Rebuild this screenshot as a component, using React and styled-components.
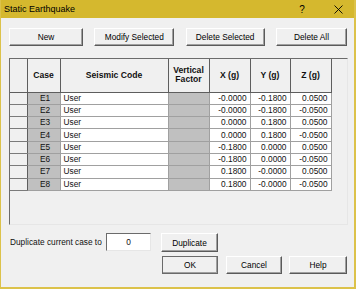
import React from 'react';
import styled, { createGlobalStyle } from 'styled-components';

const GlobalStyle = createGlobalStyle`
  html, body {
    margin: 0;
    padding: 0;
    background: #ffffff;
  }
  * {
    box-sizing: border-box;
  }
`;

const Window = styled.div`
  width: 356px;
  height: 289px;
  display: flex;
  flex-direction: column;
  background: #f0f0f0;
  border-left: 1px solid #dcc24a;
  border-right: 2px solid #dcc24a;
  border-bottom: 2px solid #dcc24a;
  font-family: 'Liberation Sans', Arial, sans-serif;
  font-size: 8.3px;
  color: #101010;
`;

const TitleBar = styled.div`
  height: 18px;
  flex-shrink: 0;
  display: flex;
  align-items: center;
  background: #d5b82e;
  padding-left: 3px;
  font-size: 9px;
  color: #000;
`;

const Title = styled.span`
  flex: 1;
`;

const HelpGlyph = styled.span`
  width: 12px;
  font-size: 10px;
  text-align: center;
  margin-right: 26px;
`;

const CloseIcon = styled.svg`
  width: 9px;
  height: 9px;
  margin-right: 11px;
`;

const Content = styled.div`
  flex: 1;
  display: flex;
  flex-direction: column;
  padding: 10px 6px 0 8px;
`;

const ButtonRow = styled.div`
  display: flex;
  justify-content: ${(p) => p.$justify || 'space-between'};
  padding-right: 1px;
  margin-top: ${(p) => p.$top || '0'};
`;

const Button = styled.button`
  width: ${(p) => p.$w}px;
  height: ${(p) => p.$h || 18}px;
  padding: 0;
  margin-left: ${(p) => p.$ml || 0}px;
  font-family: inherit;
  font-size: 8.3px;
  color: #000;
  background: #f0f0f0;
  border: 1px solid;
  border-color: #ffffff #5a5a5a #5a5a5a #ffffff;
  box-shadow: inset -1px -1px 0 #a0a0a0;
  outline: ${(p) => (p.$default ? '1px solid #6a6a6a' : 'none')};
  outline-offset: -1px;
`;

const GridBox = styled.div`
  margin-top: 12px;
  height: 167px;
  background: #f0f0f0;
  border: 1px solid;
  border-color: #6b6b6b #e6e6e6 #e6e6e6 #6b6b6b;
  overflow: hidden;
`;

const Table = styled.table`
  border-collapse: collapse;
  table-layout: fixed;
  width: 321px;
`;

const HeadCell = styled.th`
  height: 33px;
  padding: 0;
  font-weight: bold;
  font-size: 8.6px;
  line-height: 9.5px;
  text-align: center;
  background: #f0f0f0;
  border: 1px solid #5e5e5e;
  border-top: none;
  &:first-child {
    border-left: none;
  }
`;

const RowHead = styled.td`
  height: 12.3px;
  padding: 0;
  background: #f0f0f0;
  border-right: 1px solid #5e5e5e;
  border-bottom: 1px solid #7a7a7a;
`;

const Cell = styled.td`
  height: 12.3px;
  padding: ${(p) => (p.$align === 'right' ? '0 3px 0 0' : '0 0 0 3px')};
  line-height: 11px;
  text-align: ${(p) => p.$align || 'left'};
  background: ${(p) => (p.$shade ? '#c0c0c0' : '#ffffff')};
  border: 1px solid #a0a0a0;
  border-top: none;
  white-space: nowrap;
`;

const DuplicateRow = styled.div`
  display: flex;
  align-items: center;
  margin-top: 8px;
  height: 19px;
`;

const Label = styled.span`
  width: 97px;
  padding-left: 1px;
  margin-top: -2px;
`;

const NumberBox = styled.div`
  width: 45px;
  height: 18px;
  display: flex;
  align-items: center;
  justify-content: center;
  background: #ffffff;
  border: 1px solid;
  border-color: #6b6b6b #e6e6e6 #e6e6e6 #6b6b6b;
  margin-top: -1px;
`;

const cases = [
  ['E1', '-0.0000', '-0.1800', '0.0500'],
  ['E2', '-0.0000', '-0.1800', '-0.0500'],
  ['E3', '0.0000', '0.1800', '0.0500'],
  ['E4', '0.0000', '0.1800', '-0.0500'],
  ['E5', '-0.1800', '0.0000', '0.0500'],
  ['E6', '-0.1800', '0.0000', '-0.0500'],
  ['E7', '0.1800', '-0.0000', '0.0500'],
  ['E8', '0.1800', '-0.0000', '-0.0500'],
];

const App = () => (
  <>
    <GlobalStyle />
    <Window>
      <TitleBar>
        <Title>Static Earthquake</Title>
        <HelpGlyph>?</HelpGlyph>
        <CloseIcon viewBox="0 0 9 9">
          <path d="M0.5 0.5 L8.5 8.5 M8.5 0.5 L0.5 8.5" stroke="#000" strokeWidth="0.9" />
        </CloseIcon>
      </TitleBar>
      <Content>
        <ButtonRow>
          <Button $w={74}>New</Button>
          <Button $w={80}>Modify Selected</Button>
          <Button $w={79}>Delete Selected</Button>
          <Button $w={71}>Delete All</Button>
        </ButtonRow>

        <GridBox>
          <Table>
            <colgroup>
              <col style={{ width: 17 }} />
              <col style={{ width: 33 }} />
              <col style={{ width: 108 }} />
              <col style={{ width: 41 }} />
              <col style={{ width: 41 }} />
              <col style={{ width: 40 }} />
              <col style={{ width: 41 }} />
            </colgroup>
            <thead>
              <tr>
                <HeadCell />
                <HeadCell>Case</HeadCell>
                <HeadCell>Seismic Code</HeadCell>
                <HeadCell>
                  Vertical
                  <br />
                  Factor
                </HeadCell>
                <HeadCell>X (g)</HeadCell>
                <HeadCell>Y (g)</HeadCell>
                <HeadCell>Z (g)</HeadCell>
              </tr>
            </thead>
            <tbody>
              {cases.map(([name, x, y, z]) => (
                <tr key={name}>
                  <RowHead />
                  <Cell $shade $align="center">{name}</Cell>
                  <Cell>User</Cell>
                  <Cell $shade />
                  <Cell $align="right">{x}</Cell>
                  <Cell $align="right">{y}</Cell>
                  <Cell $align="right">{z}</Cell>
                </tr>
              ))}
            </tbody>
          </Table>
        </GridBox>

        <DuplicateRow>
          <Label>Duplicate current case to</Label>
          <NumberBox>0</NumberBox>
          <Button $w={57} $h={19} $ml={10}>Duplicate</Button>
        </DuplicateRow>

        <ButtonRow $justify="flex-end" $top="4px">
          <Button $w={56} $default>OK</Button>
          <Button $w={56} $ml={8}>Cancel</Button>
          <Button $w={58} $ml={7}>Help</Button>
        </ButtonRow>
      </Content>
    </Window>
  </>
);

export default App;
